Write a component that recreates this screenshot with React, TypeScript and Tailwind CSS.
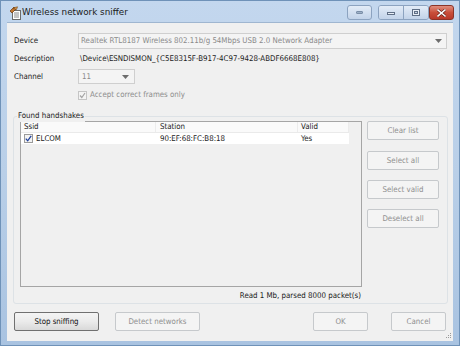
import React from "react";

const F = "font-['DejaVu_Sans_Condensed','DejaVu_Sans',sans-serif]";

function DisabledBtn({ label, className = "" }: { label: string; className?: string }) {
  return (
    <div
      className={`h-[19px] flex items-center justify-center border border-[#c6c9cc] rounded-[2px] bg-[#f4f4f4] text-[#8f8f8f] ${className}`}
    >
      {label}
    </div>
  );
}

function TitleIcon() {
  return (
    <svg width="14" height="14" viewBox="0 0 14 14">
      <rect x="3.5" y="4.5" width="8" height="9" fill="#ffffff" stroke="#6b6b6b" />
      <line x1="5" y1="7" x2="10" y2="7" stroke="#8a8a8a" />
      <line x1="5" y1="9" x2="10" y2="9" stroke="#8a8a8a" />
      <line x1="5" y1="11" x2="10" y2="11" stroke="#8a8a8a" />
      <path d="M1 5 L5 1 L7 3 L3 7 Z" fill="#c0742c" stroke="#6a3a10" strokeWidth="0.7" />
      <path d="M4 2 L8.5 0.8 L7.5 3.5 Z" fill="#e8a850" stroke="#6a3a10" strokeWidth="0.6" />
    </svg>
  );
}

export default function App() {
  return (
    <div className={`w-[460px] h-[346px] overflow-hidden ${F}`}>
      <div className="w-[460px] h-[346px] flex flex-col border border-[#6f92b8] bg-gradient-to-b from-[#c3d7ee] via-[#b9cfe8] to-[#a9c3e1]">
        {/* Title bar */}
        <div className="h-[21px] flex items-start shrink-0">
          <div className="ml-[8px] mt-[5px]">
            <TitleIcon />
          </div>
          <div className="ml-[-1px] mt-[6px] text-[8.8px] text-[#1a1a1a] leading-[11px] font-['DejaVu_Sans',sans-serif]">Wireless network sniffer</div>
          <div className="flex-1" />
          <div className="mt-[4px] w-[25px] h-[15px] rounded-[3px] border border-[#8ca3c0] bg-gradient-to-b from-[#e3ecf7] to-[#c2d3e9] flex items-center justify-center">
            <div className="w-[7px] h-[3px] rounded-[1px] bg-[#9db0c6] border border-[#7a8ea8]" />
          </div>
          <div className="mt-[4px] ml-[6px] flex h-[15px] rounded-[3px] border border-[#8ca3c0] overflow-hidden">
            <div className="w-[25px] h-full bg-gradient-to-b from-[#e3ecf7] to-[#c2d3e9] flex items-center justify-center border-r border-[#8ca3c0]">
              <div className="w-[8px] h-[3px] bg-[#e8eef6] border border-[#5f6f86] mt-[2px]" />
            </div>
            <div className="w-[24px] h-full bg-gradient-to-b from-[#e3ecf7] to-[#c2d3e9] flex items-center justify-center">
              <div className="w-[8px] h-[7px] border border-[#5f6f86] bg-[#e8eef6] flex items-center justify-center">
                <div className="w-[4px] h-[3px] border border-[#5f6f86] bg-[#c8d4e4]" />
              </div>
            </div>
          </div>
          <div className="mt-[4px] mr-[5px] w-[25px] h-[15px] rounded-[3px] border border-[#8a3428] bg-gradient-to-b from-[#e08e7e] via-[#c94f3b] to-[#b8382a] flex items-center justify-center">
            <svg width="9" height="8" viewBox="0 0 9 8">
              <path d="M1 1 L8 7 M8 1 L1 7" stroke="#5a1a12" strokeWidth="2.8" strokeLinecap="square" />
              <path d="M1 1 L8 7 M8 1 L1 7" stroke="#ffffff" strokeWidth="1.6" strokeLinecap="square" />
            </svg>
          </div>
        </div>

        {/* Client area */}
        <div className="relative ml-[6px] w-[446px] h-[319px] bg-[#f0f0f0] border-t border-[#9fb6d0] text-[7.85px] text-[#1b1b1b] leading-[10px]">
          {/* Device */}
          <div className="mt-[10px] h-[16px] flex items-center pl-[7px]">
            <div className="w-[64px]">Device</div>
            <div className="w-[369px] h-[16px] border border-[#cfcfcf] bg-[#f4f4f4] flex items-center pl-[2px] text-[#8a8a8a]">
              <div className="flex-1">Realtek RTL8187 Wireless 802.11b/g 54Mbps USB 2.0 Network Adapter</div>
              <svg width="7" height="4" viewBox="0 0 7 4" className="mr-[4px]">
                <path d="M0 0 L7 0 L3.5 4 Z" fill="#6d6d6d" />
              </svg>
            </div>
          </div>
          {/* Description */}
          <div className="mt-[3px] h-[14px] flex items-center pl-[7px]">
            <div className="w-[66px]">Description</div>
            <div>\Device\ESNDISMON_&#123;C5E8315F-B917-4C97-9428-ABDF6668E808&#125;</div>
          </div>
          {/* Channel */}
          <div className="mt-[3px] h-[15px] flex items-center pl-[7px]">
            <div className="w-[64px]">Channel</div>
            <div className="w-[57px] h-[15px] border border-[#cfcfcf] bg-[#f4f4f4] flex items-center pl-[3px] text-[#8a8a8a]">
              <div className="flex-1">11</div>
              <svg width="7" height="4" viewBox="0 0 7 4" className="mr-[5px]">
                <path d="M0 0 L7 0 L3.5 4 Z" fill="#6d6d6d" />
              </svg>
            </div>
          </div>
          {/* Checkbox */}
          <div className="mt-[4px] h-[14px] flex items-center pl-[71px] text-[#8d8d8d]">
            <div className="w-[9px] h-[9px] border border-[#c5c5c5] bg-[#f4f4f4] flex items-center justify-center">
              <svg width="7" height="7" viewBox="0 0 7 7">
                <path d="M1 3.5 L2.8 5.5 L6 1" stroke="#a5a5a5" strokeWidth="1.2" fill="none" />
              </svg>
            </div>
            <div className="ml-[3px]">Accept correct frames only</div>
          </div>

          {/* Group box */}
          <div className="relative mt-[14px] ml-[6px] w-[435px] h-[188px] border border-[#dde2e6] rounded-[3px]">
            <div className="absolute -top-[7px] left-[3px] bg-[#f0f0f0] px-[1px] leading-[12px]">Found handshakes</div>
            <div className="flex pt-[4px] pl-[6px]">
              <div className="w-[342px] flex flex-col">
                <div className="h-[166px] border border-[#a5a5a5] bg-[#f0f0f0]">
                  <div className="flex h-[11px] w-[328px] bg-[#fafafa] border-b border-[#eaeaea] items-center">
                    <div className="w-[134px] pl-[3px]">Ssid</div>
                    <div className="w-[142px] pl-[4px] border-l border-[#ececec]">Station</div>
                    <div className="w-[52px] pl-[3px] border-l border-[#ececec] border-r">Valid</div>
                  </div>
                  <div className="flex h-[11px] w-[328px] bg-white items-center">
                    <div className="w-[134px] pl-[3px] flex items-center">
                      <div className="w-[9px] h-[9px] border border-[#9a9a9a] bg-[#f3f3f3] flex items-center justify-center">
                        <svg width="7" height="7" viewBox="0 0 7 7">
                          <path d="M0.8 3.6 L2.7 5.8 L6.2 0.8" stroke="#1e3f9c" strokeWidth="1.3" fill="none" />
                        </svg>
                      </div>
                      <div className="ml-[3px]">ELCOM</div>
                    </div>
                    <div className="w-[142px] pl-[5px]">90:EF:68:FC:B8:18</div>
                    <div className="w-[52px] pl-[4px]">Yes</div>
                  </div>
                </div>
                <div className="mt-[4px] h-[12px] text-right pr-[1px]">Read 1 Mb, parsed 8000 packet(s)</div>
              </div>
              <div className="ml-[5px] w-[72px] flex flex-col">
                <DisabledBtn label="Clear list" />
                <DisabledBtn label="Select all" className="mt-[11px]" />
                <DisabledBtn label="Select valid" className="mt-[10px]" />
                <DisabledBtn label="Deselect all" className="mt-[10px]" />
              </div>
            </div>
          </div>

          {/* Bottom buttons */}
          <div className="mt-[8px] flex pl-[7px]">
            <div className="w-[85px] h-[19px] flex items-center justify-center border border-[#707070] rounded-[2px] bg-gradient-to-b from-[#f4f4f4] via-[#ebebeb] to-[#d9d9d9] text-[#111]">
              Stop sniffing
            </div>
            <DisabledBtn label="Detect networks" className="ml-[16px] w-[85px]" />
            <div className="flex-1" />
            <DisabledBtn label="OK" className="w-[55px]" />
            <DisabledBtn label="Cancel" className="ml-[23px] mr-[7px] w-[55px]" />
          </div>

          {/* Resize grip */}
          <svg className="absolute right-[1px] bottom-[2px]" width="6" height="6" viewBox="0 0 6 6">
            <rect x="4" y="0" width="1" height="1" fill="#9a9a9a" />
            <rect x="2" y="2" width="1" height="1" fill="#9a9a9a" />
            <rect x="4" y="2" width="1" height="1" fill="#9a9a9a" />
            <rect x="0" y="4" width="1" height="1" fill="#9a9a9a" />
            <rect x="2" y="4" width="1" height="1" fill="#9a9a9a" />
            <rect x="4" y="4" width="1" height="1" fill="#9a9a9a" />
          </svg>
        </div>
      </div>
    </div>
  );
}
